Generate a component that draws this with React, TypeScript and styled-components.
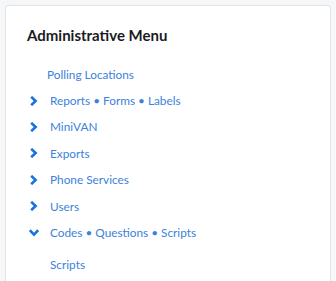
import React from "react";
import styled, { createGlobalStyle } from "styled-components";

const GlobalStyle = createGlobalStyle`
  html, body {
    margin: 0;
    padding: 0;
    background: #f6f7f9;
  }
  body {
    font-family: "Lato", "Open Sans", sans-serif;
  }
`;

const Page = styled.div`
  padding: 5px 5px 0 5px;
  height: 281px;
  box-sizing: border-box;
  overflow: hidden;
`;

const Card = styled.div`
  background: #fff;
  border: 1px solid #e2e3e6;
  border-bottom: none;
  border-radius: 4px 4px 0 0;
  padding: 19px 21px 30px 21px;
  height: 300px;
  box-sizing: border-box;
`;

const Title = styled.h2`
  margin: 0 0 16px 0;
  font-size: 15px;
  font-weight: 700;
  color: #1b1b1f;
  line-height: 20px;
`;

const Menu = styled.ul`
  list-style: none;
  margin: 0;
  padding: 0;
`;

const Item = styled.li<{ $indent?: number; $gap?: number }>`
  display: flex;
  align-items: center;
  height: 26.4px;
  padding-left: ${(p) => p.$indent ?? 0}px;
  margin-top: ${(p) => p.$gap ?? 0}px;
`;

const IconSlot = styled.span`
  width: 23px;
  padding-left: 2px;
  box-sizing: border-box;
  display: flex;
  align-items: center;
  color: #1a72e0;
`;

const Link = styled.a`
  color: #3b82dc;
  font-size: 11.8px;
  text-decoration: none;
  cursor: pointer;
`;

const Chevron = ({ open }: { open?: boolean }) => (
  <svg
    width="10"
    height="10"
    viewBox="0 0 10 10"
    style={{ transform: open ? "rotate(90deg)" : undefined }}
  >
    <path d="M2.2 0.8 L6.6 5 L2.2 9.2" fill="none" stroke="currentColor" strokeWidth="2.6" strokeLinejoin="miter" />
  </svg>
);

const groups = [
  "Reports • Forms • Labels",
  "MiniVAN",
  "Exports",
  "Phone Services",
  "Users",
];

export default function App() {
  return (
    <>
      <GlobalStyle />
      <Page>
        <Card>
          <Title>Administrative Menu</Title>
          <Menu>
            <Item $indent={20}>
              <Link>Polling Locations</Link>
            </Item>
            {groups.map((g) => (
              <Item key={g}>
                <IconSlot>
                  <Chevron />
                </IconSlot>
                <Link>{g}</Link>
              </Item>
            ))}
            <Item>
              <IconSlot>
                <Chevron open />
              </IconSlot>
              <Link>Codes • Questions • Scripts</Link>
            </Item>
            <Item $indent={23} $gap={6}>
              <Link>Scripts</Link>
            </Item>
          </Menu>
        </Card>
      </Page>
    </>
  );
}
